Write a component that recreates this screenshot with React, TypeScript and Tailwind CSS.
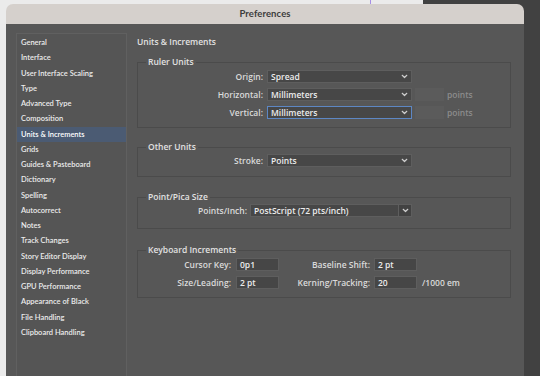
import React from 'react';

const font = { fontFamily: 'Lato, "Noto Sans", sans-serif' };
const panelFont = { fontFamily: '"Open Sans", "Noto Sans", sans-serif' };

const navItems = [
  'General',
  'Interface',
  'User Interface Scaling',
  'Type',
  'Advanced Type',
  'Composition',
  'Units & Increments',
  'Grids',
  'Guides & Pasteboard',
  'Dictionary',
  'Spelling',
  'Autocorrect',
  'Notes',
  'Track Changes',
  'Story Editor Display',
  'Display Performance',
  'GPU Performance',
  'Appearance of Black',
  'File Handling',
  'Clipboard Handling',
];

const Chevron: React.FC = () => (
  <svg width="7" height="5" viewBox="0 0 7 5" fill="none" stroke="#cfcfcf" strokeWidth="1.2" strokeLinecap="round" strokeLinejoin="round">
    <path d="M1.2 1.3 L3.5 3.5 L5.8 1.3" />
  </svg>
);

const Select: React.FC<{ value: string; width: string; focused?: boolean; split?: boolean }> = ({ value, width, focused, split }) => (
  <div
    className={`${width} h-[13px] flex items-center bg-[#474747] border ${focused ? 'border-[#5d87c4]' : 'border-[#5e5e5e]'} text-[#ececec]`}
  >
    <span className="flex-1 pl-[3px] leading-[11px] whitespace-nowrap">{value}</span>
    {split ? (
      <span className="w-[13px] h-full flex items-center justify-center border-l border-[#5e5e5e] bg-[#424242]">
        <Chevron />
      </span>
    ) : (
      <span className="pr-[3px] flex items-center">
        <Chevron />
      </span>
    )}
  </div>
);

const Field: React.FC<{ value: string }> = ({ value }) => (
  <div className="w-[43px] h-[13px] flex items-center bg-[#464646] border border-[#5e5e5e] text-[#ececec] pl-[3px] leading-[11px] whitespace-nowrap">
    {value}
  </div>
);

const Group: React.FC<{ title: string; className?: string; children: React.ReactNode }> = ({ title, className, children }) => (
  <fieldset className={`border border-[#4b4b4b] w-[374px] ${className ?? ''}`}>
    <legend className="ml-[8px] px-[2px] h-[10px] leading-[10px] text-[#e2e2e2]">{title}</legend>
    {children}
  </fieldset>
);

const Label: React.FC<{ width: string; children: React.ReactNode }> = ({ width, children }) => (
  <span className={`${width} text-right text-[#dadada] leading-[11px] whitespace-nowrap`}>{children}</span>
);

const App: React.FC = () => {
  return (
    <div className="relative w-[540px] h-[376px] overflow-hidden bg-[#ebebeb]" style={font}>
      {/* desktop behind the window */}
      <div className="absolute top-0 right-0 w-[117px] h-full bg-[#414141]" />
      <div className="absolute top-0 left-[370px] w-px h-[5px] bg-[#a68ee6]" />

      <div className="relative ml-[6px] pt-[4px] w-[518px] h-full flex flex-col">
        {/* title bar */}
        <div className="h-[20px] shrink-0 rounded-t-[7px] bg-[#d5d0cc] flex items-center justify-center">
          <span className="text-[9.5px] font-bold text-[#3c3c3c] tracking-[0.1px]">Preferences</span>
        </div>

        {/* body */}
        <div className="flex-1 bg-[#575757] flex pl-[10px] pt-[9px]">
          {/* sidebar */}
          <div className="w-[111px] shrink-0 self-stretch bg-[#555555] border-l border-t border-r border-[#606060] pt-[1px] text-[7.5px] font-semibold">
            {navItems.map((item) => (
              <div
                key={item}
                className={`h-[15.25px] flex items-center pl-[4px] ${item === 'Units & Increments' ? 'bg-[#4b5b73] text-white' : 'text-[#ececec]'}`}
              >
                {item}
              </div>
            ))}
          </div>

          {/* main */}
          <div className="ml-[10px] pt-[4px] flex flex-col text-[8.5px] font-semibold" style={panelFont}>
            <div className="h-[10px] leading-[10px] text-[#e2e2e2]">Units &amp; Increments</div>

            <Group title="Ruler Units" className="mt-[10px] pb-[8px]">
              <div className="pt-[3px] flex flex-col gap-[5px]">
                <div className="flex items-center">
                  <Label width="w-[125px]">Origin:</Label>
                  <div className="ml-[4px]"><Select value="Spread" width="w-[145px]" /></div>
                </div>
                <div className="flex items-center">
                  <Label width="w-[125px]">Horizontal:</Label>
                  <div className="ml-[4px]"><Select value="Millimeters" width="w-[145px]" /></div>
                  <div className="ml-[3px] w-[29px] h-[13px] bg-[#5b5b5b]" />
                  <span className="ml-[3px] text-[#8c8c8c] leading-[11px]">points</span>
                </div>
                <div className="flex items-center">
                  <Label width="w-[125px]">Vertical:</Label>
                  <div className="ml-[4px]"><Select value="Millimeters" width="w-[145px]" focused /></div>
                  <div className="ml-[3px] w-[29px] h-[13px] bg-[#5b5b5b]" />
                  <span className="ml-[3px] text-[#8c8c8c] leading-[11px]">points</span>
                </div>
              </div>
            </Group>

            <Group title="Other Units" className="mt-[14px] pb-[9px]">
              <div className="pt-[2px] flex items-center">
                <Label width="w-[125px]">Stroke:</Label>
                <div className="ml-[4px]"><Select value="Points" width="w-[145px]" /></div>
              </div>
            </Group>

            <Group title="Point/Pica Size" className="mt-[15px] pb-[11px]">
              <div className="pt-[2px] flex items-center">
                <Label width="w-[109px]">Points/Inch:</Label>
                <div className="ml-[3px]"><Select value="PostScript (72 pts/inch)" width="w-[162px]" split /></div>
              </div>
            </Group>

            <Group title="Keyboard Increments" className="mt-[16px] pb-[8px]">
              <div className="pt-[3px] flex flex-col gap-[5px]">
                <div className="flex items-center">
                  <Label width="w-[93px]">Cursor Key:</Label>
                  <div className="ml-[5px]"><Field value="0p1" /></div>
                  <Label width="w-[91px]">Baseline Shift:</Label>
                  <div className="ml-[4px]"><Field value="2 pt" /></div>
                </div>
                <div className="flex items-center">
                  <Label width="w-[93px]">Size/Leading:</Label>
                  <div className="ml-[5px]"><Field value="2 pt" /></div>
                  <Label width="w-[91px]">Kerning/Tracking:</Label>
                  <div className="ml-[4px]"><Field value="20" /></div>
                  <span className="ml-[5px] text-[#dadada] leading-[11px]">/1000 em</span>
                </div>
              </div>
            </Group>
          </div>
        </div>
      </div>
    </div>
  );
};

export default App;
